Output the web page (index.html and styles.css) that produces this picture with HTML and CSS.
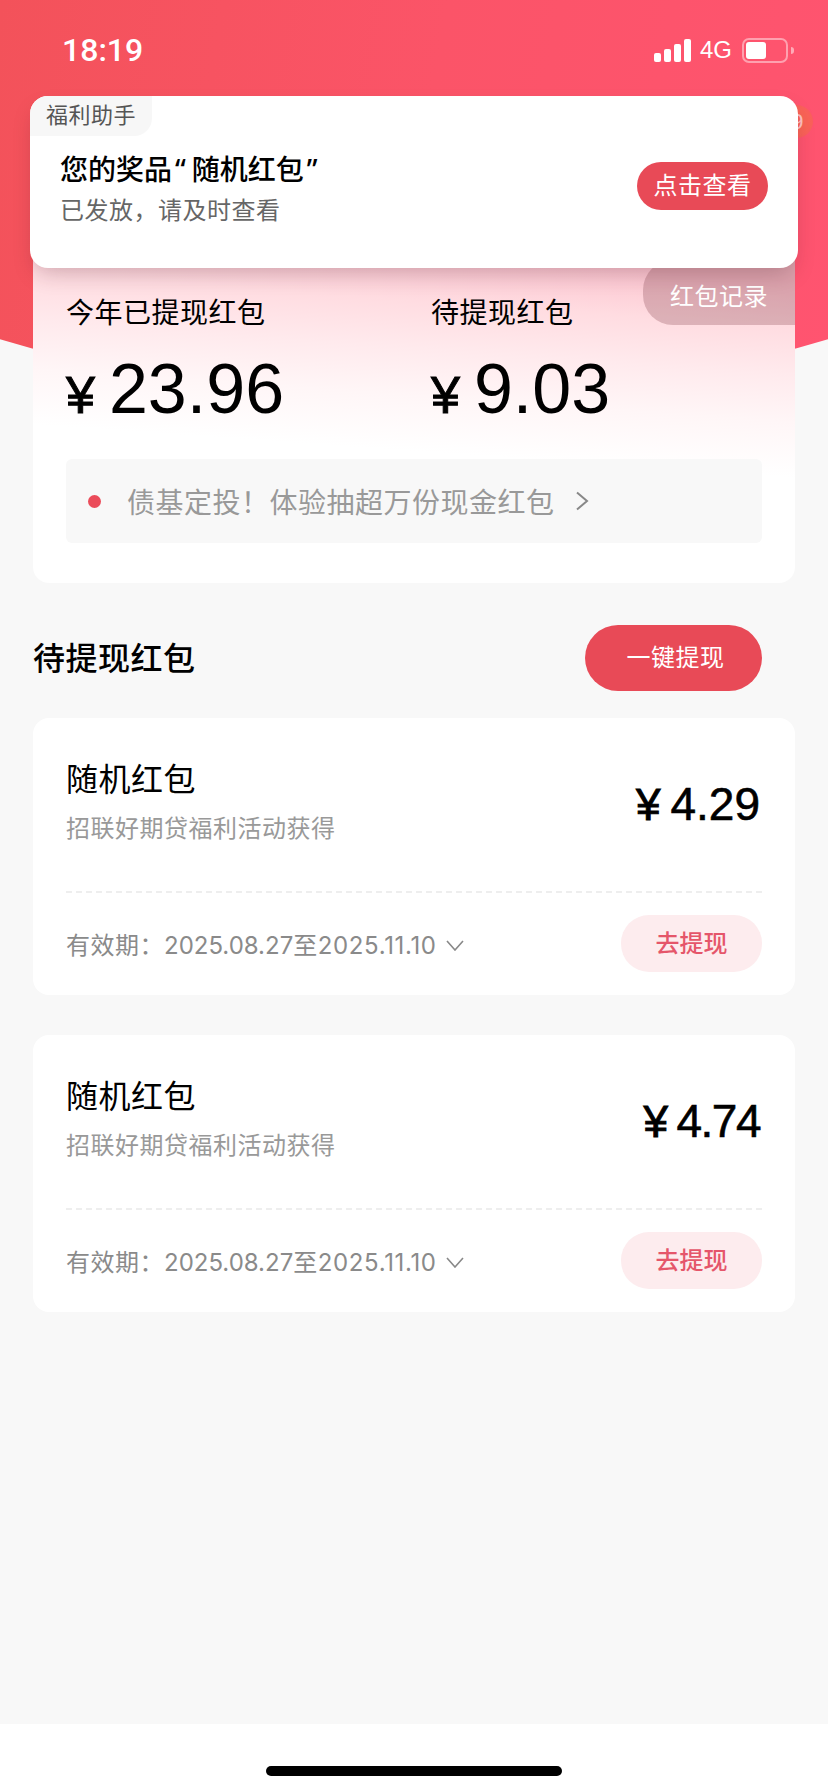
FILE: index.html
```html
<!DOCTYPE html>
<html lang="zh-CN">
<head>
    <meta charset="UTF-8">
    <meta name="viewport" content="width=device-width, initial-scale=1.0">
    <title>红包</title>
    <link rel="stylesheet" href="styles.css">
</head>
<body>
<div class="page">
    <div class="hero">
        <div class="status-bar">
            <span class="time">18:19</span>
            <div class="status-icons">
                <div class="signal">
                    <i class="bar1"></i><i class="bar2"></i><i class="bar3"></i><i class="bar4"></i>
                </div>
                <span class="network">4G</span>
                <div class="battery"><i></i></div>
                <div class="battery-tip"></div>
            </div>
        </div>
    </div>

    <div class="peek-badge"><span>9</span></div>

    <div class="notice">
        <div class="notice-tag">福利助手</div>
        <div class="notice-body">
            <div>
                <div class="notice-title">您的奖品<span class="quote">“</span>随机红包<span class="quote">”</span></div>
                <div class="notice-sub">已发放，请及时查看</div>
            </div>
            <div class="notice-btn">点击查看</div>
        </div>
    </div>

    <div class="content">
        <div class="summary">
            <div class="record-btn">红包记录</div>
            <div class="totals">
                <div class="total">
                    <div class="total-label">今年已提现红包</div>
                    <div class="total-amount"><span class="yen">¥</span>23.96</div>
                </div>
                <div class="total">
                    <div class="total-label">待提现红包</div>
                    <div class="total-amount"><span class="yen">¥</span>9.03</div>
                </div>
            </div>
            <div class="promo">
                <i class="promo-dot"></i>
                <span class="promo-text">债基定投！体验抽超万份现金红包</span>
                <svg class="promo-arrow" width="14" height="20" viewBox="0 0 14 20"><path d="M2 1.5 L12 10 L2 18.5" fill="none" stroke="#888" stroke-width="2"/></svg>
            </div>
        </div>

        <div class="section-head">
            <h2>待提现红包</h2>
            <div class="withdraw-all">一键提现</div>
        </div>

        <div class="packet">
            <div class="packet-top">
                <div class="packet-info">
                    <div class="packet-title">随机红包</div>
                    <div class="packet-from">招联好期贷福利活动获得</div>
                </div>
                <div class="packet-amount"><span class="yen">¥</span>4.29</div>
            </div>
            <div class="packet-bottom">
                <div class="packet-date">
                    <span>有效期：</span><span class="date-from">2025.08.27</span><span>至</span><span class="date-to">2025.11.10</span>
                    <svg class="date-arrow" width="18" height="11" viewBox="0 0 18 11"><path d="M1 1 L9 10 L17 1" fill="none" stroke="#888" stroke-width="1.6"/></svg>
                </div>
                <div class="packet-btn">去提现</div>
            </div>
        </div>

        <div class="packet">
            <div class="packet-top">
                <div class="packet-info">
                    <div class="packet-title">随机红包</div>
                    <div class="packet-from">招联好期贷福利活动获得</div>
                </div>
                <div class="packet-amount tight"><span class="yen">¥</span>4.74</div>
            </div>
            <div class="packet-bottom">
                <div class="packet-date">
                    <span>有效期：</span><span class="date-from">2025.08.27</span><span>至</span><span class="date-to">2025.11.10</span>
                    <svg class="date-arrow" width="18" height="11" viewBox="0 0 18 11"><path d="M1 1 L9 10 L17 1" fill="none" stroke="#888" stroke-width="1.6"/></svg>
                </div>
                <div class="packet-btn">去提现</div>
            </div>
        </div>
    </div>

    <div class="home-bar"><i></i></div>
</div>
</body>
</html>
```

FILE: styles.css
```css
* {
    box-sizing: border-box;
}
body {
    margin: 0;
    font-family: "Liberation Sans", "Noto Sans CJK SC", sans-serif;
    color: #000;
    letter-spacing: 0.5px;
}
.page {
    position: relative;
    display: flex;
    flex-direction: column;
    width: 828px;
    height: 1792px;
    overflow: hidden;
    background: #f8f8f8;
}

/* red header */
.hero {
    height: 400px;
    background: linear-gradient(100deg, #f3525a 0%, #fb5468 50%, #ff5470 100%);
    clip-path: circle(1440px at 414px -1040px);
}
.status-bar {
    display: flex;
    justify-content: space-between;
    align-items: center;
    height: 100px;
    padding: 0 34px 0 62px;
    color: #fff;
    letter-spacing: 0;
}
.time {
    font-family: Roboto, sans-serif;
    font-size: 32px;
    font-weight: 500;
}
.status-icons {
    display: flex;
    align-items: center;
}
.signal {
    display: flex;
    align-items: flex-end;
    gap: 3px;
    height: 23px;
    margin-left: 1px;
}
.signal i {
    width: 7px;
    border-radius: 2px;
    background: #fff;
}
.signal .bar1 { height: 9px; }
.signal .bar2 { height: 13px; }
.signal .bar3 { height: 18px; }
.signal .bar4 { height: 23px; }
.network {
    margin-left: 9px;
    font-size: 24px;
}
.battery {
    width: 46px;
    height: 25px;
    margin-left: 10px;
    padding: 2px;
    border: 2px solid rgba(255, 255, 255, 0.45);
    border-radius: 7px;
}
.battery i {
    display: block;
    width: 20px;
    height: 17px;
    border-radius: 3px;
    background: #fff;
}
.battery-tip {
    width: 3px;
    height: 7px;
    margin-left: 3px;
    border-radius: 0 3px 3px 0;
    background: rgba(255, 255, 255, 0.5);
}

/* badge mostly hidden behind the notice */
.peek-badge {
    position: absolute;
    top: 105px;
    left: 780px;
    width: 33px;
    height: 33px;
    border-radius: 50%;
    background: radial-gradient(#f8694f 50%, #fb5c5f 100%);
    color: #ffe6dc;
    font-size: 22px;
    line-height: 33px;
    text-align: right;
    padding-right: 9px;
    opacity: 0.75;
}

/* notice over the page */
.notice {
    position: absolute;
    top: 96px;
    left: 30px;
    z-index: 2;
    width: 768px;
    height: 172px;
    border-radius: 18px;
    background: #fff;
    box-shadow: 0 10px 22px -6px rgba(60, 20, 30, 0.25);
}
.notice-tag {
    width: 122px;
    height: 40px;
    padding-left: 16px;
    border-radius: 18px 0 18px 0;
    background: #f7f7f7;
    color: #555;
    font-size: 22px;
    line-height: 40px;
}
.notice-body {
    display: flex;
    justify-content: space-between;
    align-items: center;
    padding: 8px 30px 0 30px;
}
.notice-title {
    margin-top: 7px;
    font-size: 28px;
    font-weight: 500;
    letter-spacing: 0;
    line-height: 36px;
}
.quote {
    margin: 0 6px 0 3px;
    font-family: "Noto Sans", sans-serif;
}
.notice-sub {
    margin-top: 5px;
    color: #666;
    font-size: 24px;
    line-height: 34px;
}
.notice-btn {
    width: 131px;
    height: 48px;
    border-radius: 24px;
    background: #e84a57;
    color: #fff;
    font-size: 24px;
    line-height: 48px;
    text-align: center;
}

/* page body */
.content {
    display: flex;
    flex-direction: column;
    flex: 1;
    margin-top: -160px;
    padding: 0 33px;
    position: relative;
}
.summary {
    position: relative;
    height: 343px;
    padding: 0 33px;
    border-radius: 16px;
    background: linear-gradient(184deg, #fcc4cf 10%, #ffdce1 22%, #ffeaed 34%, #fff6f7 46%, #fff 60%);
}
.record-btn {
    position: absolute;
    top: 20px;
    right: 0;
    width: 152px;
    height: 65px;
    padding: 25px 0 0 27px;
    border-radius: 30px 0 0 30px;
    background: rgba(140, 75, 85, 0.3);
    color: #fff;
    font-size: 24px;
    line-height: 24px;
}
.totals {
    display: flex;
    padding-top: 56px;
}
.total {
    flex: none;
    width: 365px;
}
.total-label {
    font-size: 28px;
    line-height: 36px;
}
.total-amount {
    margin-top: 18px;
    font-size: 70px;
    letter-spacing: 0;
    line-height: 78px;
}
.total-amount .yen {
    margin-right: 14px;
    font-size: 52px;
    -webkit-text-stroke: 1px #000;
}
.promo {
    display: flex;
    align-items: center;
    height: 84px;
    margin-top: 25px;
    padding-left: 22px;
    border-radius: 6px;
    background: #f8f8f8;
}
.promo-dot {
    width: 13px;
    height: 13px;
    border-radius: 50%;
    background: #eb4c5a;
}
.promo-text {
    margin-left: 26px;
    color: #999;
    font-size: 28px;
}
.promo-arrow {
    margin-left: 20px;
}

.section-head {
    display: flex;
    justify-content: space-between;
    align-items: center;
    height: 66px;
    margin-top: 42px;
    padding-right: 33px;
}
.section-head h2 {
    margin: 0 0 4px;
    font-size: 32px;
    font-weight: 500;
}
.withdraw-all {
    width: 177px;
    height: 66px;
    padding-left: 4px;
    border-radius: 33px;
    background: #e84a57;
    color: #fff;
    font-size: 24px;
    line-height: 66px;
    text-align: center;
}

.packet {
    height: 277px;
    margin-top: 27px;
    padding: 0 33px;
    border-radius: 16px;
    background: #fff;
}
.packet + .packet {
    margin-top: 40px;
}
.packet-top {
    display: flex;
    justify-content: space-between;
    align-items: center;
    height: 175px;
    padding-bottom: 2px;
    border-bottom: 2px dashed #eee;
}
.packet-info {
    margin-bottom: 4px;
}
.packet-title {
    font-size: 32px;
    line-height: 42px;
}
.packet-from {
    margin-top: 12px;
    color: #999;
    font-size: 24px;
    line-height: 32px;
}
.packet-amount {
    margin-right: 2px;
    font-size: 46px;
    letter-spacing: 0;
    -webkit-text-stroke: 0.6px #000;
}
.packet-amount.tight {
    letter-spacing: -1.5px;
}
.packet-amount .yen {
    margin-right: 10px;
    font-size: 44px;
    -webkit-text-stroke: 1px #000;
}
.packet-bottom {
    display: flex;
    justify-content: space-between;
    align-items: center;
    height: 100px;
}
.packet-date {
    display: flex;
    align-items: baseline;
    color: #8a8a8a;
    font-size: 24px;
}
.date-from,
.date-to {
    font-family: Inter, sans-serif;
}
.date-from {
    letter-spacing: 0;
}
.date-to {
    letter-spacing: 0.64px;
}
.date-arrow {
    align-self: center;
    margin-left: 9px;
    margin-top: 4px;
}
.packet-btn {
    width: 141px;
    height: 57px;
    border-radius: 28px;
    background: #fdecee;
    color: #e5566a;
    font-size: 24px;
    font-weight: 500;
    letter-spacing: 0;
    line-height: 57px;
    text-align: center;
}

.home-bar {
    display: flex;
    justify-content: center;
    height: 68px;
    padding-top: 42px;
    background: #fff;
}
.home-bar i {
    width: 296px;
    height: 10px;
    border-radius: 5px;
    background: #000;
}
```
